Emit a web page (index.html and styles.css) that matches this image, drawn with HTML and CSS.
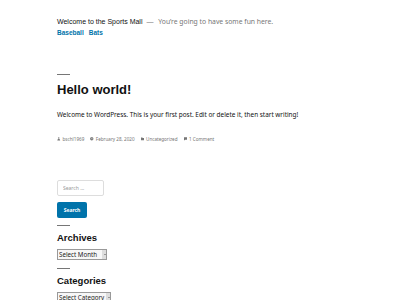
FILE: index.html
```html
<!DOCTYPE html>
<html>
<head>
  <meta charset="utf-8">
  <title>Sports Mall</title>
  <link rel="stylesheet" href="styles.css">
</head>
<body>
  <!-- site header -->
  <header class="site-header">
    <div class="site-branding">
      <span class="site-title">Welcome to the Sports Mall</span>
      <span class="site-description">You’re going to have some fun here.</span>
    </div>
    <nav class="main-nav">
      <a href="#">Baseball</a>
      <a href="#">Bats</a>
    </nav>
  </header>

  <!-- post -->
  <article class="post">
    <hr class="rule">
    <h1 class="entry-title">Hello world!</h1>
    <p class="entry-content">Welcome to WordPress. This is your first post. Edit or delete it, then start writing!</p>
    <div class="entry-meta">
      <span class="meta-item">
        <svg viewBox="0 0 10 10"><circle cx="5" cy="3" r="2.2"/><path d="M1 10c0-3 2-4.2 4-4.2s4 1.2 4 4.2z"/></svg>
        bschl1969
      </span>
      <span class="meta-item">
        <svg viewBox="0 0 10 10"><circle cx="5" cy="5" r="4.8"/><path d="M5 2v3.5h2.5" stroke="#fff" stroke-width="1.3" fill="none"/></svg>
        February 28, 2020
      </span>
      <span class="meta-item">
        <svg viewBox="0 0 10 10"><path d="M0 1.5h4l1 1.2h5v6.5H0z"/></svg>
        Uncategorized
      </span>
      <span class="meta-item">
        <svg viewBox="0 0 10 10"><path d="M0 1h10v7H3.5L0 10z"/></svg>
        1 Comment
      </span>
    </div>
  </article>

  <!-- sidebar widgets -->
  <aside class="widgets">
    <form class="search-form">
      <input type="text" class="search-field" placeholder="Search …">
      <input type="button" class="search-submit" value="Search">
    </form>

    <section class="widget">
      <hr class="rule">
      <h2 class="widget-title">Archives</h2>
      <span class="select-wrap month"><select class="widget-select"><option>Select Month</option></select></span>
    </section>

    <section class="widget">
      <hr class="rule">
      <h2 class="widget-title">Categories</h2>
      <span class="select-wrap category"><select class="widget-select"><option>Select Category</option></select></span>
    </section>
  </aside>
</body>
</html>
```

FILE: styles.css
```css
* {box-sizing: border-box}

body {
  margin: 0;
  padding: 0 57px;
  background: #fff;
  color: #111;
  font-family: "Noto Sans", "Liberation Sans", sans-serif;
  font-size: 7px;
  line-height: 10px;
}

/* header */
.site-header {
  padding-top: 17px;
}

.site-title {
  font-family: "Liberation Sans", sans-serif;
  font-size: 7px;
  color: #111;
}

.site-title::after {
  content: "—";
  color: #767676;
  margin: 0 3px 0 4px;
}

.site-description {
  font-size: 6.8px;
  color: #767676;
}

.main-nav {
  margin-top: 1px;
  display: flex;
  gap: 5px;
}

.main-nav a {
  font-family: "Liberation Sans", sans-serif;
  font-size: 6.5px;
  font-weight: bold;
  color: #0073aa;
  text-decoration: none;
}

/* post */
.rule {
  width: 13px;
  height: 1px;
  margin: 0;
  border: none;
  background: #767676;
}

.post {
  padding-top: 36px;
}

.entry-title {
  font-family: "Liberation Sans", sans-serif;
  font-size: 13px;
  line-height: 16px;
  font-weight: bold;
  margin: 7px 0 0 0;
}

.entry-content {
  font-size: 6.4px;
  margin: 12px 0 0 0;
}

.entry-meta {
  margin-top: 15px;
  font-size: 4.6px;
  line-height: 8px;
  color: #767676;
  display: flex;
  gap: 6px;
}

.meta-item {
  display: flex;
  align-items: center;
  gap: 2px;
}

.meta-item svg {
  width: 3.5px;
  height: 3.5px;
  fill: #767676;
}

/* widgets */
.widgets {
  padding-top: 37px;
}

.search-field {
  display: block;
  width: 47px;
  height: 16px;
  border: 1px solid #ddd;
  border-radius: 2px;
  padding: 0 5px;
  font-size: 5px;
  font-family: "Noto Sans", sans-serif;
}

.search-field::placeholder {
  color: #999;
}

.search-submit {
  display: block;
  margin-top: 6px;
  width: 30px;
  height: 16px;
  border: none;
  border-radius: 2px;
  background: #0073aa;
  color: #fff;
  font-size: 5px;
  font-weight: bold;
  font-family: "Noto Sans", sans-serif;
  padding: 0;
}

.widget {
  padding-top: 7px;
}

.widget + .widget {
  padding-top: 8px;
}

.widget-title {
  font-family: "Liberation Sans", sans-serif;
  font-size: 9.5px;
  line-height: 12px;
  font-weight: bold;
  margin: 6px 0 5px 0;
}

.select-wrap {
  display: block;
  position: relative;
  height: 11px;
}

.select-wrap.month {
  width: 50px;
}

.select-wrap.category {
  width: 54px;
}

.widget-select {
  appearance: none;
  width: 100%;
  height: 11px;
  margin: 0;
  padding: 0 5px 0 1px;
  border: 1px solid #999;
  border-radius: 0;
  background: linear-gradient(to left, #ddd 4px, #f7f7f7 4px);
  font-family: "Noto Sans", sans-serif;
  font-size: 6.2px;
  color: #222;
}

/* tiny dropdown arrow on the grey box */
.select-wrap::after {
  content: "";
  position: absolute;
  right: 1px;
  top: 5px;
  border-left: 1px solid transparent;
  border-right: 1px solid transparent;
  border-top: 1.5px solid #555;
}
```
